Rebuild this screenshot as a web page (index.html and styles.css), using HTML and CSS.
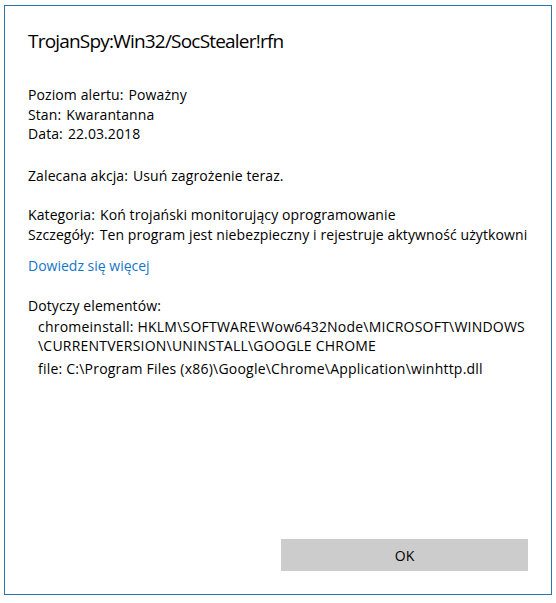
FILE: index.html
```html
<!DOCTYPE html>
<html lang="pl">
<head>
  <meta charset="UTF-8">
  <title>TrojanSpy:Win32/SocStealer!rfn</title>
  <link rel="stylesheet" href="styles.css">
</head>
<body>

  <div class="dialog">
    <h1 class="title">TrojanSpy:Win32/SocStealer!rfn</h1>

    <div class="group">
      <p class="row"><span class="label">Poziom alertu:</span>Poważny</p>
      <p class="row"><span class="label">Stan:</span>Kwarantanna</p>
      <p class="row"><span class="label">Data:</span>22.03.2018</p>
    </div>

    <div class="group action">
      <p class="row"><span class="label">Zalecana akcja:</span>Usuń zagrożenie teraz.</p>
    </div>

    <div class="group">
      <p class="row"><span class="label">Kategoria:</span>Koń trojański monitorujący oprogramowanie</p>
      <p class="row"><span class="label">Szczegóły:</span>Ten program jest niebezpieczny i rejestruje aktywność użytkowni</p>
    </div>

    <a class="more" href="#">Dowiedz się więcej</a>

    <div class="group">
      <p class="row">Dotyczy elementów:</p>
      <p class="item">chromeinstall: HKLM\SOFTWARE\Wow6432Node\MICROSOFT\WINDOWS<br>\CURRENTVERSION\UNINSTALL\GOOGLE CHROME</p>
      <p class="item">file: C:\Program Files (x86)\Google\Chrome\Application\winhttp.dll</p>
    </div>

    <div class="actions">
      <button class="ok">OK</button>
    </div>
  </div>

</body>
</html>
```

FILE: styles.css
```css
/* reset */
* { margin:0; padding:0; box-sizing:border-box }
body {
  background:#fff;
  font-family:"Open Sans", "Noto Sans", sans-serif;
  color:#000;
}

/* dialog frame */
.dialog {
  margin:5px 0 0 4px;
  width:548px; height:590px;
  border:1px solid #2a73ad;
  padding:0 23px 23px;
  display:flex; flex-direction:column;
}

.title {
  font-weight:400;
  font-size:19px;
  letter-spacing:-.8px;
  line-height:26px;
  margin-top:22px;
  margin-bottom:31px;
}

/* text blocks */
.group { margin-bottom:22px; }
.group.action { margin-bottom:20px; }
.row, .item {
  font-size:14px;
  letter-spacing:.1px;
  line-height:19.5px;
  white-space:nowrap;
}
.label { margin-right:5px; }
.item { padding-left:10px; margin-top:1px; letter-spacing:.22px; }
.item + .item { margin-top:3px; }

.more {
  font-size:14px;
  color:#1574c9;
  text-decoration:none;
  margin:-10px 0 21px;
  align-self:flex-start;
}

/* bottom button */
.actions {
  margin-top:auto;
  display:flex; justify-content:flex-end;
}
.ok {
  width:247px; height:32px;
  border:none;
  background:#ccc;
  font-family:inherit;
  font-size:14px;
  color:#000;
}
```
